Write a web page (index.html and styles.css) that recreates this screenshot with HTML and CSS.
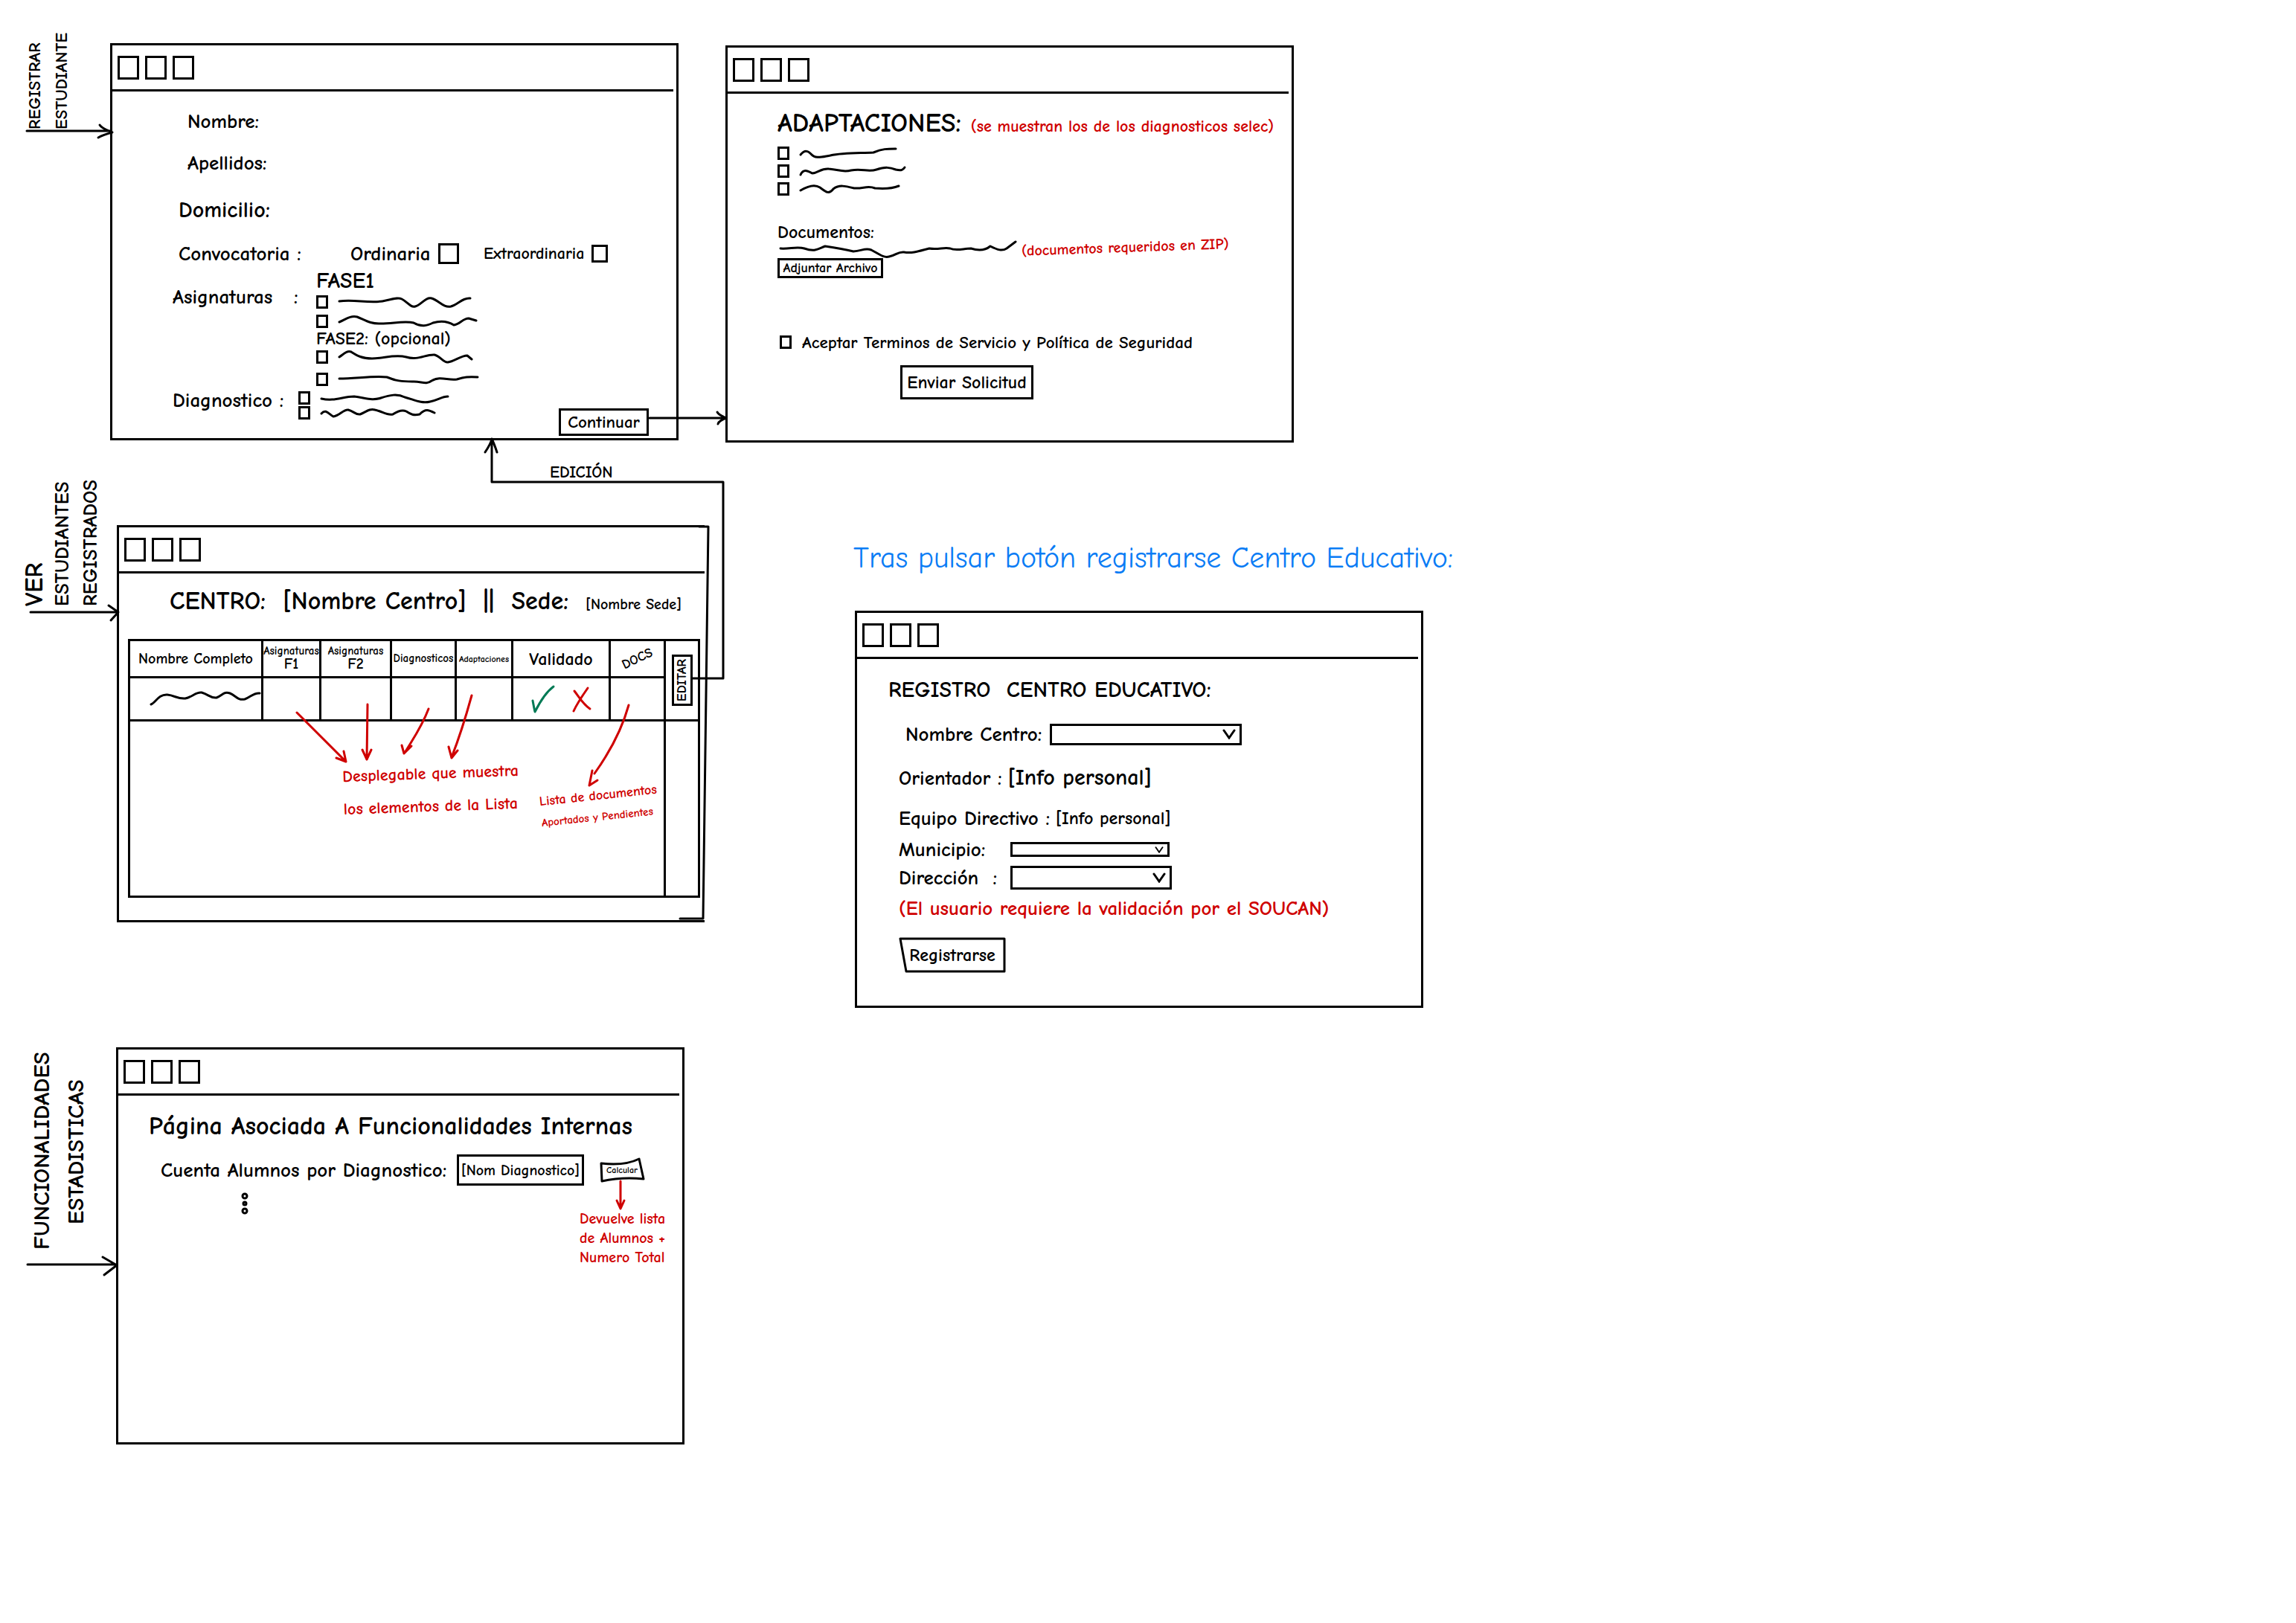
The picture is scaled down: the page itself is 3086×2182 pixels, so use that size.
FILE: index.html
```html
<!DOCTYPE html>
<html lang="es">
<head>
<meta charset="utf-8">
<meta name="viewport" content="width=device-width, initial-scale=1">
<title>Prototipos de pantallas</title>
<link rel="stylesheet" href="styles.css">
</head>
<body>
<main class="board">

  <p class="flow-label flow-register">REGISTRAR<br>ESTUDIANTE</p>
  <section class="window win-student" aria-label="Registrar estudiante">
    <header class="titlebar"><i></i><i></i><i></i></header>
    <form class="body student-form">
      <div class="field indent-3 h-56"><label for="nombre">Nombre:</label><input id="nombre" class="plain" type="text"></div>
      <div class="field indent-3 h-56"><label for="apellidos">Apellidos:</label><input id="apellidos" class="plain" type="text"></div>
      <div class="field indent-2 h-72 t-30"><label for="domicilio">Domicilio:</label><input id="domicilio" class="plain" type="text"></div>
      <div class="field indent-2 h-44">
        <span class="call-label">Convocatoria :</span>
        <label class="call-option">Ordinaria <input class="check check-lg" type="checkbox"></label>
        <label class="call-option t-22">Extraordinaria <input class="check check-md" type="checkbox"></label>
      </div>
      <div class="group indent-1">
        <span class="group-label subjects">Asignaturas&nbsp;&nbsp; :</span>
        <div class="options">
          <span class="phase t-30">FASE1</span>
          <label class="option h-26"><input class="check" type="checkbox" aria-label="Asignatura 1"><svg class="squiggle" width="190" height="20"><path d="M2 9C22 6 40 12 60 9C72 7 80 3 86 6C94 10 98 18 104 16C112 14 118 3 126 5C136 8 142 18 152 16C162 13 168 4 178 5"/></svg></label>
          <label class="option h-26"><input class="check" type="checkbox" aria-label="Asignatura 2"><svg class="squiggle" width="190" height="20"><path d="M2 11C10 8 16 2 26 4C36 8 44 14 58 13C74 13 90 9 102 12C112 18 120 16 128 12C138 9 148 10 156 15C164 14 168 6 176 6L186 9"/></svg></label>
          <span class="phase phase-2 t-24">FASE2: (opcional)</span>
          <label class="option h-30"><input class="check" type="checkbox" aria-label="Asignatura 3"><svg class="squiggle" width="190" height="20"><path d="M2 10C8 6 12 1 18 3C26 8 32 12 46 12C62 12 76 6 92 10C108 15 118 6 130 7C138 9 142 18 148 17C156 16 166 8 174 8L180 13"/></svg></label>
          <label class="option h-30"><input class="check" type="checkbox" aria-label="Asignatura 4"><svg class="squiggle" width="190" height="20"><path d="M2 9C24 9 48 5 66 7C78 12 86 13 100 13C112 12 118 18 126 12C138 5 148 12 160 10C170 7 176 6 188 7"/></svg></label>
        </div>
      </div>
      <div class="group group-last indent-1">
        <span class="group-label diagnosis">Diagnostico :</span>
        <div class="options">
          <label class="option h-20"><input class="check" type="checkbox" aria-label="Diagnostico 1"><svg class="squiggle" width="180" height="20"><path d="M2 11C20 15 30 8 46 8C62 10 70 14 82 10C94 6 104 4 114 9C126 12 136 18 148 15C158 13 164 8 172 8"/></svg></label>
          <label class="option h-20"><input class="check" type="checkbox" aria-label="Diagnostico 2"><svg class="squiggle" width="180" height="20"><path d="M2 11C8 4 12 12 18 15C26 14 32 5 38 6C46 8 48 13 54 12C62 9 66 4 74 6C84 8 90 14 98 12C104 8 110 5 116 8C122 12 126 14 134 12C142 4 146 6 154 10"/></svg></label>
        </div>
        <button class="btn btn-continue" type="button">Continuar</button>
      </div>
    </form>
  </section>

  <section class="window win-adapt" aria-label="Adaptaciones">
    <header class="titlebar"><i></i><i></i><i></i></header>
    <form class="body adapt-form">
      <h2 class="adapt-title">ADAPTACIONES: <span class="red t-22">(se muestran los de los diagnosticos selec)</span></h2>
      <div class="options">
        <label class="option h-24"><input class="check" type="checkbox" aria-label="Adaptación 1"><svg class="squiggle" width="150" height="20"><path d="M2 12C8 5 12 7 16 11C22 18 30 15 42 13C60 9 80 10 100 9C112 4 118 4 130 4"/></svg></label>
        <label class="option h-24"><input class="check" type="checkbox" aria-label="Adaptación 2"><svg class="squiggle" width="150" height="20"><path d="M2 15C6 6 12 10 18 13C26 12 30 6 40 7C54 8 58 12 70 9C86 6 92 12 104 8C116 4 122 5 130 8C138 10 140 8 142 5"/></svg></label>
        <label class="option h-24"><input class="check" type="checkbox" aria-label="Adaptación 3"><svg class="squiggle" width="150" height="20"><path d="M2 12C12 6 22 4 28 8C36 14 40 18 46 10C54 4 62 6 74 9C86 10 92 5 102 9C114 10 124 10 134 6"/></svg></label>
      </div>
      <label class="docs-label t-24" for="adjuntar">Documentos:</label>
      <div class="docs-row">
        <svg class="squiggle" width="322" height="20"><path d="M4 7C16 8 26 4 36 7C50 12 54 8 64 4C78 6 90 8 102 11C114 10 118 6 126 9C136 14 142 20 150 18C160 16 162 11 170 12C182 14 192 10 204 7C216 9 224 5 232 7C240 11 250 7 260 7C272 11 280 9 286 4C296 9 302 11 308 7L320 -2"/></svg>
        <span class="red t-20 docs-note">(documentos requeridos en ZIP)</span>
      </div>
      <button class="btn btn-attach t-18" id="adjuntar" type="button">Adjuntar Archivo</button>
      <label class="terms"><input class="check" type="checkbox"> Aceptar Terminos de Servicio y Política de Seguridad</label>
      <button class="btn btn-send" type="button">Enviar Solicitud</button>
    </form>
  </section>

  <span class="edit-label">EDICIÓN</span>

  <p class="flow-label flow-view"><span class="t-34">VER</span><br>ESTUDIANTES<br>REGISTRADOS</p>
  <section class="window win-list" aria-label="Ver estudiantes registrados">
    <header class="titlebar"><i></i><i></i><i></i></header>
    <div class="body">
      <h2 class="center-title"><span>CENTRO:</span><span>[Nombre Centro]</span><span>||</span><span>Sede:</span><span class="t-20">[Nombre Sede]</span></h2>
      <table class="students">
        <colgroup><col class="c-name"><col class="c-f1"><col class="c-f2"><col class="c-diag"><col class="c-adap"><col class="c-valid"><col class="c-docs"><col class="c-edit"></colgroup>
        <tbody>
          <tr class="row-head">
            <th scope="col" class="t-20">Nombre Completo</th>
            <th scope="col">Asignaturas<br><span class="t-20">F1</span></th>
            <th scope="col">Asignaturas<br><span class="t-20">F2</span></th>
            <th scope="col">Diagnosticos</th>
            <th scope="col" class="t-12">Adaptaciones</th>
            <th scope="col" class="t-24">Validado</th>
            <th scope="col" class="t-18"><span class="docs-head">DOCS</span></th>
            <td rowspan="2"><button class="btn btn-edit t-18" type="button">EDITAR</button></td>
          </tr>
          <tr class="row-student">
            <td><svg class="squiggle" width="150" height="22"><path d="M2 18C8 16 12 4 24 5C34 6 38 11 48 10C58 8 62 1 70 2C80 5 82 10 90 9C98 6 100 0 108 3C116 6 118 13 128 11C136 8 140 2 148 3"/></svg></td>
            <td></td><td></td><td></td><td></td>
            <td><div class="verdict">
              <button class="icon-btn" type="button" aria-label="Validar"><svg width="34" height="38"><path class="ok" d="M3 21C4 26 5 32 6 36C12 24 20 10 31 2"/></svg></button>
              <button class="icon-btn" type="button" aria-label="Rechazar"><svg width="26" height="34"><path class="ko" d="M3 6C10 15 15 24 24 30M21 2C14 12 7 22 2 33"/></svg></button>
            </div></td>
            <td></td>
          </tr>
          <tr class="row-rest"><td colspan="7"></td><td></td></tr>
        </tbody>
      </table>
    </div>
  </section>
  <p class="note note-dropdown">Desplegable que muestra<br>los elementos de la Lista</p>
  <p class="note note-docs">Lista de documentos<br><span class="t-15">Aportados y Pendientes</span></p>

  <h1 class="headline">Tras pulsar botón registrarse Centro Educativo:</h1>
  <section class="window win-center" aria-label="Registro centro educativo">
    <header class="titlebar"><i></i><i></i><i></i></header>
    <form class="body center-form">
      <h2 class="form-title">REGISTRO&nbsp; CENTRO EDUCATIVO:</h2>
      <div class="field center-name"><label for="centro">Nombre Centro:</label><select id="centro" class="select select-lg"><option></option></select></div>
      <p class="field h-44">Orientador :<span class="t-30">[Info personal]</span></p>
      <p class="field h-64">Equipo Directivo :<span class="t-24">[Info personal]</span></p>
      <div class="field h-20 short"><label for="municipio">Municipio:</label><select id="municipio" class="select select-sm"><option></option></select></div>
      <div class="field h-56 short"><label for="direccion">Dirección&nbsp; :</label><select id="direccion" class="select select-md"><option></option></select></div>
      <p class="field red h-26">(El usuario requiere la validación por el SOUCAN)</p>
      <button class="shape-btn btn-signup" type="button"><svg width="144" height="48"><path d="M2 2H142V46H10Z"/></svg><span>Registrarse</span></button>
    </form>
  </section>

  <p class="flow-label flow-stats">FUNCIONALIDADES<br><span class="second">ESTADISTICAS</span></p>
  <section class="window win-stats" aria-label="Funcionalidades estadísticas">
    <header class="titlebar"><i></i><i></i><i></i></header>
    <form class="body">
      <h2 class="stats-title">Página Asociada A Funcionalidades Internas</h2>
      <div class="stats-row">
        <label for="diag">Cuenta Alumnos por Diagnostico:</label>
        <input id="diag" class="box-input" type="text" value="[Nom Diagnostico]">
        <button class="shape-btn btn-calc t-12" type="button"><svg width="62" height="34"><path d="M3 8C20 10 38 10 54 2L60 29C40 27 22 28 4 32Z"/></svg><span>Calcular</span></button>
      </div>
      <svg class="dots" width="14" height="32"><circle cx="7" cy="5" r="3"/><circle cx="7" cy="15" r="2"/><circle cx="7" cy="25" r="3"/></svg>
    </form>
  </section>
  <p class="note note-calc t-20">Devuelve lista<br>de Alumnos +<br>Numero Total</p>

  <svg class="arrows" aria-hidden="true">
    <path d="M36 176H148M134 168C137 173 144 175 151 178C143 180 137 182 132 185"/>
    <path d="M873 562H976M964 554C966 558 972 560 976 562C971 564 966 566 965 570"/>
    <path d="M930 912H972V648H661V590M652 608C656 602 660 596 661 590C664 596 666 602 668 608"/>
    <path d="M41 823H158M146 814L159 823L149 834"/>
    <path d="M37 1700H157M138 1690L157 1701L140 1714"/>
    <path d="M940 708H952L945 1235H914"/>
    <g class="red-lines">
      <path d="M399 958L464 1023M452 1019L465 1024L462 1010"/>
      <path d="M494 947L493 1020M487 1008L493 1021L499 1008"/>
      <path d="M576 953C567 977 556 992 544 1012M540 1002L543 1013L553 1003"/>
      <path d="M634 935C626 964 618 990 607 1018M603 1004L607 1019L615 1009"/>
      <path d="M845 948C835 984 819 1012 799 1040M796 1036L792 1056L803 1049"/>
      <path d="M834 1588V1624M829 1614L834 1625L839 1614"/>
    </g>
  </svg>
</main>
</body>
</html>
```
FILE: styles.css
```css
:root {
  --ink: #000;
  --red: #cf0000;
  --blue: #0a7cf5;
  --green: #007a55;
  --line: 3px solid var(--ink);
}

* { box-sizing: border-box; }

body {
  margin: 0;
  background: #fff;
  color: var(--ink);
  font: 700 27px/1 "Comic Neue", Lato, sans-serif;
}

h1, h2, p { margin: 0; font-weight: inherit; }

button, input, select {
  margin: 0;
  padding: 0;
  border: 0;
  border-radius: 0;
  background: none;
  color: inherit;
  font: inherit;
}

svg { display: block; overflow: visible; fill: none; stroke: var(--ink); stroke-width: 3; stroke-linecap: round; stroke-linejoin: round; }

.note { position: absolute; color: var(--red); font-size: 18px; white-space: nowrap; }

.t-12 { font-size: 12px; }
.t-15 { font-size: 15px; }
.t-18 { font-size: 18px; }
.t-20 { font-size: 20px; }
.t-22 { font-size: 22px; }
.t-24 { font-size: 24px; }
.t-30 { font-size: 30px; }
.t-34 { font-size: 34px; }
.red { color: var(--red); }

.h-20 { height: 20px; }
.h-24 { height: 24px; }
.h-26 { height: 26px; }
.h-30 { height: 30px; }
.h-44 { height: 44px; }
.h-56 { height: 56px; }
.h-64 { height: 64px; }
.h-72 { height: 72px; }

/* Board: the screens are nodes of a free canvas joined by arrows */
.board { position: relative; min-height: 100vh; overflow: hidden; }
.window { position: absolute; width: 764px; min-height: 534px; border: var(--line); display: flex; flex-direction: column; }
.win-student { left: 148px; top: 58px; }
.win-adapt { left: 975px; top: 61px; }
.win-list { left: 157px; top: 706px; width: 790px; border-right: 0; }
.win-center { left: 1149px; top: 821px; }
.win-stats { left: 156px; top: 1408px; }

.titlebar { display: flex; gap: 8px; height: 62px; margin-right: 4px; padding: 14px 7px 0; border-bottom: var(--line); }
.titlebar i { width: 29px; height: 32px; border: var(--line); }
.win-list .titlebar { margin-right: 0; }

.body { flex: 1; display: flex; flex-direction: column; white-space: nowrap; }

.arrows { position: absolute; left: 0; top: 0; width: 100%; height: 100%; pointer-events: none; }
.red-lines { stroke: var(--red); }

.flow-label { position: absolute; writing-mode: vertical-rl; transform: rotate(180deg); white-space: nowrap; }
.flow-register { left: 29px; top: 24px; height: 150px; font-size: 23px; line-height: 36px; }
.flow-view { left: 27px; top: 635px; height: 180px; line-height: 38px; }
.flow-stats { left: 33px; top: 1400px; height: 280px; font-size: 31px; line-height: 46px; }
.flow-stats .second { padding-top: 34px; }
.edit-label { position: absolute; left: 739px; top: 624px; font-size: 22px; }

.note-dropdown { left: 461px; top: 1018px; font-size: 22px; line-height: 44px; transform: rotate(-2deg); }
.note-docs { left: 726px; top: 1056px; line-height: 28px; transform: rotate(-6deg); }
.note-calc { left: 779px; top: 1626px; line-height: 26px; }
.headline { position: absolute; left: 1147px; top: 726px; color: var(--blue); font-size: 40px; font-weight: 400; line-height: 48px; white-space: nowrap; }

/* Controls */
.check { appearance: none; flex: none; width: 16px; height: 18px; border: var(--line); }
.check-lg { width: 28px; height: 28px; }
.check-md { width: 22px; height: 24px; }
.btn { border: var(--line); text-align: center; }
.plain { flex: 1; min-width: 0; outline: 0; }
.field { display: flex; align-items: center; }
.option { display: flex; align-items: center; gap: 13px; }
.shape-btn { position: relative; display: grid; place-items: center; }
.shape-btn svg { position: absolute; left: 0; top: 0; }

/* Student form */
.student-form { padding-top: 12px; }
.indent-1 { padding-left: 81px; }
.indent-2 { padding-left: 89px; }
.indent-3 { padding-left: 101px; }
.call-label { width: 231px; }
.call-option { display: flex; align-items: center; gap: 10px; width: 179px; }
.group { display: flex; align-items: flex-start; }
.group-last { flex: 1; }
.group-label { line-height: 28px; }
.subjects { width: 193px; margin-top: 23px; }
.diagnosis { width: 169px; }
.phase { display: block; line-height: 30px; }
.phase-2 { line-height: 20px; }
.btn-continue { align-self: flex-end; width: 121px; height: 37px; margin: 0 37px 3px auto; font-size: 23px; }

/* Adaptations form */
.adapt-form { padding: 12px 0 0 67px; align-items: flex-start; }
.adapt-title { height: 56px; line-height: 56px; font-size: 36px; }
.docs-label { margin-top: 31px; line-height: 30px; }
.docs-row { display: flex; gap: 6px; height: 20px; }
.docs-note { line-height: 12px; transform: rotate(-2deg); }
.btn-attach { width: 142px; height: 27px; }
.terms { display: flex; align-items: center; gap: 14px; height: 30px; margin: 71px 0 0 3px; font-size: 23px; }
.btn-send { width: 179px; height: 46px; margin: 16px 0 0 165px; font-size: 24px; }

/* Student list */
.center-title { display: flex; align-items: baseline; gap: 23px; height: 88px; padding: 20px 0 0 68px; font-size: 34px; }
.students { width: 766px; margin-left: 12px; border-collapse: collapse; table-layout: fixed; font-size: 15px; }
.students th, .students td { padding: 0; border: var(--line); font-weight: inherit; }
.row-head { height: 50px; }
.row-student { height: 58px; }
.row-rest { height: 237px; }
.c-name { width: 179px; }
.c-f1 { width: 78px; }
.c-f2 { width: 95px; }
.c-diag { width: 87px; }
.c-adap { width: 76px; }
.c-valid { width: 131px; }
.c-docs { width: 74px; }
.c-edit { width: 46px; }
.students .squiggle { margin-left: auto; }
.students th.t-20 { font-size: 20px; }
.docs-head { display: inline-block; transform: rotate(-25deg); }
.btn-edit { display: block; width: 28px; height: 69px; margin: 0 auto; writing-mode: vertical-rl; transform: rotate(180deg); }
.verdict { display: flex; justify-content: center; gap: 22px; }
.ok { stroke: var(--green); }
.ko { stroke: var(--red); }

/* School form */
.center-form { padding: 20px 0 0 56px; align-items: flex-start; }
.form-title { margin-left: -14px; height: 44px; line-height: 44px; font-size: 30px; }
.center-name { height: 74px; padding-left: 9px; }
.center-name label { width: 194px; }
.short label { width: 150px; }
.center-form p { gap: 8px; }
.select {
  appearance: none;
  border: var(--line);
  background: url("data:image/svg+xml,%3Csvg xmlns='http://www.w3.org/2000/svg' viewBox='0 0 18 14' fill='none' stroke='%23000' stroke-width='3' stroke-linecap='round'%3E%3Cpath d='M2 2L9 12L16 2'/%3E%3C/svg%3E") no-repeat right 5px center / 18px 14px;
}
.select-lg { width: 258px; height: 29px; }
.select-md { width: 217px; height: 32px; }
.select-sm { width: 214px; height: 20px; background-size: 12px 9px; }
.btn-signup { width: 144px; height: 48px; margin-top: 26px; font-size: 24px; }

/* Statistics */
.stats-title { margin: 12px 0 0 41px; height: 58px; line-height: 58px; font-size: 34px; }
.stats-row { display: flex; align-items: center; height: 60px; padding-left: 57px; }
.stats-row label { min-width: 387px; }
.box-input { width: 171px; height: 42px; margin: 0 20px 0 11px; border: var(--line); text-align: center; font-size: 20px; }
.btn-calc { width: 62px; height: 34px; }
.dots { margin-left: 163px; }
```
